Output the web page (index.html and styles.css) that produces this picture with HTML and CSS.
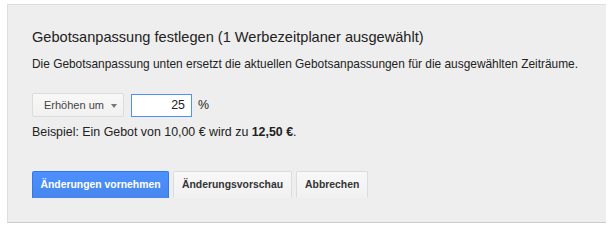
FILE: index.html
```html
<!DOCTYPE html>
<html lang="de">
<head>
<meta charset="utf-8">
<title>Gebotsanpassung festlegen</title>
<link rel="stylesheet" href="styles.css">
</head>
<body>
<div class="panel">
  <h2 class="title">Gebotsanpassung festlegen (1 Werbezeitplaner ausgewählt)</h2>
  <p class="desc">Die Gebotsanpassung unten ersetzt die aktuellen Gebotsanpassungen für die ausgewählten Zeiträume.</p>
  <div class="row">
    <div class="select">Erhöhen um <span class="arrow"></span></div>
    <div class="input">25</div>
    <span class="pct">%</span>
  </div>
  <p class="example">Beispiel: Ein Gebot von 10,00 € wird zu <b>12,50 €</b>.</p>
  <div class="actions">
    <div class="btn primary">Änderungen vornehmen</div>
    <div class="btn">Änderungsvorschau</div>
    <div class="btn">Abbrechen</div>
  </div>
</div>
</body>
</html>
```
FILE: styles.css
```css
html, body {
  margin: 0;
  padding: 0;
  background: #fff;
}
body {
  font-family: "Liberation Sans", Arial, sans-serif;
  color: #222;
}
.panel {
  margin: 4px 0 0 7px;
  width: 599px;
  height: 219px;
  box-sizing: border-box;
  background: #eeeeee;
  border-top: 1px solid #dedede;
  border-left: 1px solid #dedede;
  border-bottom: 1px solid #cccccc;
  padding: 23px 0 0 24px;
  white-space: nowrap;
}
.title {
  margin: 0;
  font-size: 14.6px;
  font-weight: normal;
  line-height: 18px;
  color: #222;
}
.desc {
  margin: 10px 0 0;
  font-size: 11.9px;
  line-height: 16px;
  color: #222;
}
.row {
  display: flex;
  align-items: center;
  margin-top: 21px;
  height: 24px;
}
.select {
  box-sizing: border-box;
  width: 92px;
  height: 24px;
  border: 1px solid #dcdcdc;
  border-radius: 2px;
  background: linear-gradient(#f8f8f8, #f1f1f1);
  font-size: 11px;
  color: #444;
  display: flex;
  align-items: center;
  padding-left: 11px;
  gap: 7px;
}
.arrow {
  width: 0;
  height: 0;
  border-left: 3.5px solid transparent;
  border-right: 3.5px solid transparent;
  border-top: 4px solid #777;
  margin-top: 1px;
}
.input {
  box-sizing: border-box;
  width: 61px;
  height: 23px;
  margin-left: 7px;
  border: 1px solid #4d90fe;
  background: #fff;
  font-size: 12.4px;
  color: #222;
  text-align: right;
  padding-right: 6px;
  line-height: 21px;
}
.pct {
  margin-left: 6px;
  font-size: 12.4px;
  color: #222;
}
.example {
  margin: 7px 0 0;
  font-size: 12.4px;
  line-height: 16px;
  color: #222;
}
.actions {
  display: flex;
  gap: 4px;
  margin-top: 31px;
}
.btn {
  box-sizing: border-box;
  height: 27px;
  padding: 0 8px;
  border: 1px solid #dcdcdc;
  border-bottom-color: #f1f1f1;
  border-radius: 2px 2px 0 0;
  background: linear-gradient(#f8f8f8, #f1f1f1);
  font-size: 10.4px;
  font-weight: bold;
  color: #333;
  display: flex;
  align-items: center;
}
.btn.primary {
  background: linear-gradient(#4d90fe, #4787ed);
  border-color: #3079ed;
  border-bottom-color: #4787ed;
  color: #fff;
  width: 137px;
  justify-content: center;
}
```
